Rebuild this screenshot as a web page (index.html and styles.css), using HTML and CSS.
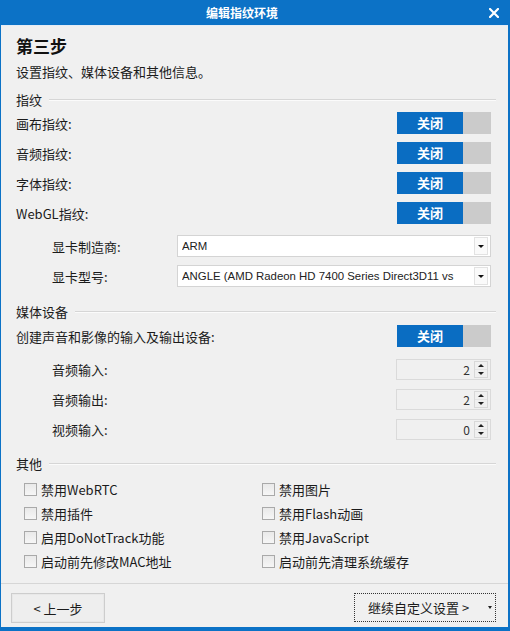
FILE: index.html
```html
<!DOCTYPE html>
<html lang="zh-CN">
<head>
<meta charset="utf-8">
<title>编辑指纹环境</title>
<link rel="stylesheet" href="styles.css">
</head>
<body>
<div class="window">
  <div class="titlebar">
    <div class="title">编辑指纹环境</div>
    <div class="close">
      <svg width="10" height="10" viewBox="0 0 10 10"><path d="M1 1L9 9M9 1L1 9" stroke="#fff" stroke-width="2.2" stroke-linecap="square"/></svg>
    </div>
  </div>
  <div class="content">
    <h1 class="step">第三步</h1>
    <p class="desc">设置指纹、媒体设备和其他信息。</p>

    <div class="section"><span>指纹</span><i class="rule"></i></div>
    <div class="row"><span class="label">画布指纹:</span><div class="toggle"><span class="on">关闭</span><span class="off"></span></div></div>
    <div class="row"><span class="label">音频指纹:</span><div class="toggle"><span class="on">关闭</span><span class="off"></span></div></div>
    <div class="row"><span class="label">字体指纹:</span><div class="toggle"><span class="on">关闭</span><span class="off"></span></div></div>
    <div class="row"><span class="label">WebGL指纹:</span><div class="toggle"><span class="on">关闭</span><span class="off"></span></div></div>
    <div class="row sub first"><span class="label">显卡制造商:</span><div class="combo"><span class="val">ARM</span><span class="arrow"></span></div></div>
    <div class="row sub"><span class="label">显卡型号:</span><div class="combo"><span class="val">ANGLE (AMD Radeon HD 7400 Series Direct3D11 vs</span><span class="arrow"></span></div></div>

    <div class="section sec-media"><span>媒体设备</span><i class="rule"></i></div>
    <div class="row create"><span class="label">创建声音和影像的输入及输出设备:</span><div class="toggle"><span class="on">关闭</span><span class="off"></span></div></div>
    <div class="row spinrow first"><span class="label">音频输入:</span><div class="spin"><span class="num">2</span><span class="spinbtns"><i class="up"></i><i class="down"></i></span></div></div>
    <div class="row spinrow"><span class="label">音频输出:</span><div class="spin"><span class="num">2</span><span class="spinbtns"><i class="up"></i><i class="down"></i></span></div></div>
    <div class="row spinrow"><span class="label">视频输入:</span><div class="spin"><span class="num">0</span><span class="spinbtns"><i class="up"></i><i class="down"></i></span></div></div>

    <div class="section sec-other"><span>其他</span><i class="rule"></i></div>
    <div class="checks">
      <label class="cb"><span class="box"></span>禁用WebRTC</label>
      <label class="cb"><span class="box"></span>禁用图片</label>
      <label class="cb"><span class="box"></span>禁用插件</label>
      <label class="cb"><span class="box"></span>禁用Flash动画</label>
      <label class="cb"><span class="box"></span>启用DoNotTrack功能</label>
      <label class="cb"><span class="box"></span>禁用JavaScript</label>
      <label class="cb"><span class="box"></span>启动前先修改MAC地址</label>
      <label class="cb"><span class="box"></span>启动前先清理系统缓存</label>
    </div>
  </div>
  <div class="footer">
    <button class="btn prev">&lt; 上一步</button>
    <button class="btn next"><span class="nexttext">继续自定义设置 &gt;</span><span class="caret"></span></button>
  </div>
</div>
</body>
</html>
```
FILE: styles.css
```css
html, body {
  margin: 0;
  padding: 0;
}
body {
  width: 510px;
  height: 631px;
  font-family: "Noto Sans CJK SC", "Noto Sans", sans-serif;
  font-size: 13px;
  color: #1b1b1b;
  overflow: hidden;
}
.window {
  box-sizing: border-box;
  width: 510px;
  height: 631px;
  display: flex;
  flex-direction: column;
  background: #f0f0f0;
  border-left: 1px solid #0c72c6;
  border-right: 2px solid #0c72c6;
  border-bottom: 4px solid #0c72c6;
}
.titlebar {
  flex: none;
  height: 25px;
  display: flex;
  align-items: center;
  background: #0c72c6;
  color: #fff;
  border-bottom: 1px solid #e4ecf6;
}
.title {
  flex: 1;
  text-align: center;
  font-size: 12px;
  font-weight: bold;
  line-height: 25px;
}
.close {
  width: 22px;
  height: 25px;
  margin-right: 3px;
  display: flex;
  align-items: center;
  justify-content: center;
}
.content {
  flex: 1;
  display: flex;
  flex-direction: column;
  padding: 8px 12px 0 15px;
}
.step {
  margin: 0;
  font-size: 17px;
  font-weight: bold;
  line-height: 24px;
  height: 24px;
  color: #111;
}
.desc {
  margin: 3px 0 0;
  line-height: 22px;
  height: 22px;
}
.section {
  display: flex;
  align-items: center;
  height: 16px;
  margin-top: 9px;
  line-height: 16px;
}
.section .rule {
  flex: 1;
  height: 1px;
  background: #d6d6d6;
  border-bottom: 1px solid #fbfbfb;
  margin-left: 7px;
}
.sec-media { margin-top: 13px; }
.sec-other { margin-top: 12px; }
.row {
  display: flex;
  align-items: center;
  justify-content: space-between;
  height: 30px;
  padding-right: 5px;
}
.row.sub {
  justify-content: flex-start;
  padding-left: 36px;
}
.row.sub .label {
  width: 125px;
  flex: none;
}
.row.sub.first { margin-top: 3px; }
.row.create { margin-top: 1px; }
.row.spinrow { padding-left: 36px; }
.row.spinrow.first { margin-top: 3px; }
.toggle {
  display: flex;
  width: 94px;
  height: 22px;
  flex: none;
}
.toggle .on {
  width: 66px;
  background: #0a6dc2;
  color: #fff;
  font-weight: bold;
  text-align: center;
  line-height: 22px;
}
.toggle .off {
  flex: 1;
  background: #cbcbcb;
}
.combo {
  flex: 1;
  min-width: 0;
  box-sizing: border-box;
  height: 22px;
  border: 1px solid #d4d4d4;
  background: #fff;
  display: flex;
  align-items: center;
  padding-left: 4px;
  font-family: "Liberation Sans", "Noto Sans CJK SC", sans-serif;
  font-size: 11.4px;
  color: #222;
}
.combo .val {
  flex: 1;
  min-width: 0;
  overflow: hidden;
  white-space: nowrap;
  margin-right: 6px;
}
.combo .arrow {
  flex: none;
  box-sizing: border-box;
  width: 14px;
  height: 18px;
  margin-right: 2px;
  border: 1px solid #e2e2e2;
  background: #fafafa;
  display: flex;
  align-items: center;
  justify-content: center;
}
.combo .arrow::after {
  content: "";
  border-left: 3px solid transparent;
  border-right: 3px solid transparent;
  border-top: 3px solid #111;
}
.spin {
  box-sizing: border-box;
  width: 95px;
  height: 21px;
  border: 1px solid #dadada;
  background: #f0f0f0;
  display: flex;
  align-items: center;
  font-size: 12px;
  color: #333;
}
.spin .num {
  flex: 1;
  text-align: right;
  padding-right: 4px;
}
.spinbtns {
  box-sizing: border-box;
  width: 14px;
  height: 17px;
  margin-right: 2px;
  border: 1px solid #d8d8d8;
  display: flex;
  flex-direction: column;
}
.spinbtns i {
  flex: 1;
  display: flex;
  align-items: center;
  justify-content: center;
}
.spinbtns .up { border-bottom: 1px solid #e4e4e4; }
.spinbtns .up::after {
  content: "";
  border-left: 3px solid transparent;
  border-right: 3px solid transparent;
  border-bottom: 3px solid #222;
}
.spinbtns .down::after {
  content: "";
  border-left: 3px solid transparent;
  border-right: 3px solid transparent;
  border-top: 3px solid #222;
}
.checks {
  margin-top: 5px;
  display: grid;
  grid-template-columns: 238px 1fr;
  grid-auto-rows: 24px;
  padding-left: 8px;
}
.cb {
  display: flex;
  align-items: center;
}
.box {
  box-sizing: border-box;
  width: 13px;
  height: 13px;
  border: 1px solid #a9a9a9;
  background: linear-gradient(#e9e9e9, #f6f6f6);
  margin-right: 4px;
  flex: none;
}
.footer {
  flex: none;
  box-sizing: border-box;
  height: 44px;
  border-top: 1px solid #d6d6d6;
  display: flex;
  justify-content: space-between;
  align-items: flex-start;
  padding: 9px 12px 4px 10px;
}
.btn {
  font-family: "Noto Sans CJK SC", sans-serif;
  font-size: 13px;
  color: #1b1b1b;
  background: #eeeeee;
  margin: 0;
  padding: 0;
  box-sizing: border-box;
}
.prev {
  width: 94px;
  height: 30px;
  border: 1px solid #cdcdcd;
  box-shadow: inset 0 0 0 1px #e8e8e8;
}
.next {
  width: 142px;
  height: 29px;
  border: 1px dotted #333;
  background: #f0f0f0;
  display: flex;
  align-items: center;
  padding-left: 13px;
  padding-right: 3px;
}
.nexttext { flex: 1; text-align: left; }
.caret {
  border-left: 2px solid transparent;
  border-right: 2px solid transparent;
  border-top: 3px solid #222;
}
```
